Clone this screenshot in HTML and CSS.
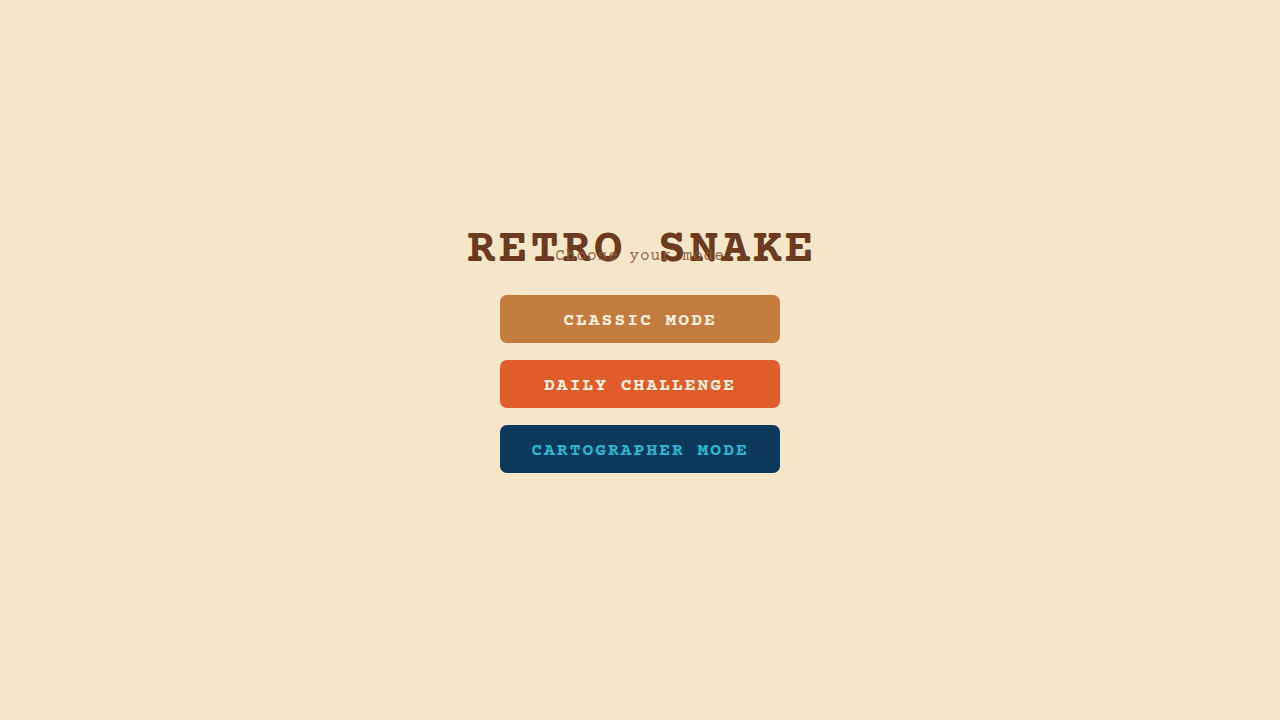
FILE: index.html
```html
<!DOCTYPE html>
<html lang="en">
<head>
  <meta charset="UTF-8" />
  <meta name="viewport" content="width=device-width, initial-scale=1.0"/>
  <title>Retro Snake</title>
  <link rel="stylesheet" href="styles.css">
</head>
<body>
  <div class="menu">
    <h1 class="title">RETRO SNAKE</h1>
    <p class="subtitle">Choose your mode</p>

    <div class="modes">
      <button class="mode classic">CLASSIC MODE</button>
      <button class="mode daily">DAILY CHALLENGE</button>
      <button class="mode carto">CARTOGRAPHER MODE</button>
    </div>
  </div>
</body>
</html>
```

FILE: styles.css
```css
body {
  font-family: 'Courier Prime', 'Nimbus Mono PS', 'FreeMono', 'Liberation Mono', 'Courier New', monospace;
  margin: 0;
  padding: 0;
  background: #f5e6c9;
  height: 100vh;
  display: flex;
  align-items: center;
  justify-content: center;
}
.menu {
  display: flex;
  flex-direction: column;
  align-items: center;
  margin-top: -13px;
}
.title {
  margin: 0;
  font-size: 48px;
  line-height: 30px;
  letter-spacing: 3px;
  margin-right: -3px;
  color: #6b3a1f;
  font-weight: bold;
}
.subtitle {
  margin: -19px 0 0;
  font-size: 16px;
  line-height: 20px;
  letter-spacing: 1px;
  color: #8a5a3c;
  opacity: 0.9;
}
.modes {
  display: flex;
  flex-direction: column;
  gap: 17px;
  margin-top: 29px;
}
.mode {
  width: 280px;
  height: 48px;
  border: none;
  border-radius: 7px;
  font-family: inherit;
  font-size: 18px;
  font-weight: bold;
  letter-spacing: 2px;
  color: #fbf1df;
  cursor: pointer;
  padding: 4px 0 0;
}
.classic {
  background: #c47c3e;
}
.daily {
  background: #e05c2a;
}
.carto {
  background: #0b3a5e;
  color: #2bb6cf;
}
```
